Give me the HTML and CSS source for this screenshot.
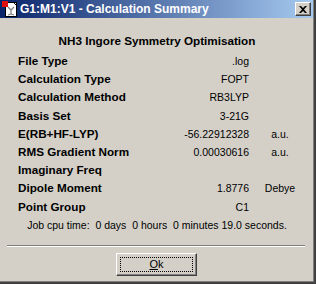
FILE: index.html
```html
<!DOCTYPE html>
<html>

<head>
	<title>G1:M1:V1 - Calculation Summary</title>
	<link rel="stylesheet" href="styles.css">
</head>

<body>
	<div class="window">
		<div class="titlebar">
			<svg class="appIcon" width="16" height="16" viewBox="0 0 16 16">
				<rect x="3.5" y="1.5" width="11" height="14" fill="#fff" stroke="#000"/>
				<polyline points="11.5,1.5 14.5,4.5" stroke="#000" fill="none"/>
				<line x1="9" y1="9" x2="6" y2="6" stroke="#808080" stroke-width="1.2"/>
				<line x1="9" y1="9" x2="12" y2="6" stroke="#808080" stroke-width="1.2"/>
				<line x1="9" y1="9" x2="9" y2="13" stroke="#808080" stroke-width="1.2"/>
				<line x1="9" y1="13" x2="6" y2="14" stroke="#808080" stroke-width="1.2"/>
				<line x1="9" y1="13" x2="12" y2="14" stroke="#808080" stroke-width="1.2"/>
				<rect x="0" y="0" width="6" height="6" fill="#e01010"/>
			</svg>
			<span class="titleText">G1:M1:V1 - Calculation Summary</span>
			<div class="closeButton">
				<svg width="8" height="7" viewBox="0 0 8 7">
					<path d="M0 0 L2 0 L4 2 L6 0 L8 0 L5 3.5 L8 7 L6 7 L4 5 L2 7 L0 7 L3 3.5 Z" fill="#000"/>
				</svg>
			</div>
		</div>

		<div class="content">
			<div class="heading">NH3 Ingore Symmetry Optimisation</div>

			<div class="summary">
				<span class="label">File Type</span><span class="value">.log</span><span class="unit"></span>
				<span class="label">Calculation Type</span><span class="value">FOPT</span><span class="unit"></span>
				<span class="label">Calculation Method</span><span class="value">RB3LYP</span><span class="unit"></span>
				<span class="label">Basis Set</span><span class="value">3-21G</span><span class="unit"></span>
				<span class="label">E(RB+HF-LYP)</span><span class="value">-56.22912328</span><span class="unit">a.u.</span>
				<span class="label">RMS Gradient Norm</span><span class="value">0.00030616</span><span class="unit">a.u.</span>
				<span class="label">Imaginary Freq</span><span class="value"></span><span class="unit"></span>
				<span class="label">Dipole Moment</span><span class="value">1.8776</span><span class="unit">Debye</span>
				<span class="label">Point Group</span><span class="value">C1</span><span class="unit"></span>
			</div>

			<div class="cpuTime">Job cpu time:  0 days  0 hours  0 minutes 19.0 seconds.</div>

			<div class="separator"></div>

			<div class="buttonRow">
				<div class="button"><span class="focusRect"><u>O</u>k</span></div>
			</div>
		</div>
	</div>
</body>

</html>
```

FILE: styles.css
```css
:root {
	--faceColor: #d4d0c8;
	--shadowColor: #808080;
	--darkColor: #404040;
	--lightColor: #ffffff;
	--titleLeft: #0a246a;
	--titleRight: #a6caf0;
}

body {
	margin: 0;
	background-color: var(--faceColor);
	font-family: "Liberation Sans", Arial, sans-serif;
	color: #000;
}

.window {
	width: 316px;
	height: 284px;
	box-sizing: border-box;
	background-color: var(--faceColor);
	border-right: 2px solid var(--darkColor);
	border-bottom: 2px solid var(--darkColor);
	box-shadow: inset -1px -1px var(--shadowColor);
	overflow: hidden;
}

.titlebar {
	height: 18px;
	margin-right: 1px;
	display: flex;
	align-items: center;
	background: linear-gradient(to right, var(--titleLeft), var(--titleRight));
}

.appIcon {
	margin-left: 2px;
	margin-right: 2px;
	flex: none;
}

.titleText {
	flex: 1;
	color: #fff;
	font-weight: bold;
	font-size: 12px;
	white-space: nowrap;
}

.closeButton {
	width: 16px;
	height: 14px;
	box-sizing: border-box;
	margin-right: 2px;
	display: flex;
	align-items: center;
	justify-content: center;
	background-color: var(--faceColor);
	border-top: 1px solid var(--lightColor);
	border-left: 1px solid var(--lightColor);
	border-right: 1px solid var(--darkColor);
	border-bottom: 1px solid var(--darkColor);
	box-shadow: inset -1px -1px var(--shadowColor);
}

.content {
	padding-top: 14px;
}

.heading {
	text-align: center;
	font-weight: bold;
	font-size: 11.7px;
	line-height: 18px;
	margin-bottom: 2px;
}

.summary {
	display: grid;
	grid-template-columns: 140px 91px 62px;
	padding-left: 18px;
	line-height: 18.2px;
}

.label {
	font-weight: bold;
	font-size: 11.7px;
	white-space: nowrap;
}

.value {
	text-align: right;
	font-size: 10.5px;
}

.unit {
	text-align: center;
	font-size: 10.5px;
}

.cpuTime {
	text-align: center;
	font-size: 10.5px;
	line-height: 18px;
	white-space: pre;
}

.separator {
	margin: 11px 0 0 7px;
	width: 298px;
	border-top: 1px solid var(--shadowColor);
	border-bottom: 1px solid var(--lightColor);
}

.buttonRow {
	display: flex;
	padding-left: 116px;
	margin-top: 6px;
}

.button {
	width: 81px;
	height: 23px;
	box-sizing: border-box;
	padding: 3px;
	background-color: var(--faceColor);
	border-top: 1px solid var(--lightColor);
	border-left: 1px solid var(--lightColor);
	border-right: 1px solid var(--darkColor);
	border-bottom: 1px solid var(--darkColor);
	box-shadow: inset -1px -1px var(--shadowColor);
}

.focusRect {
	display: flex;
	align-items: center;
	justify-content: center;
	height: 100%;
	box-sizing: border-box;
	border: 1px dotted #000;
	font-size: 11px;
}
```
